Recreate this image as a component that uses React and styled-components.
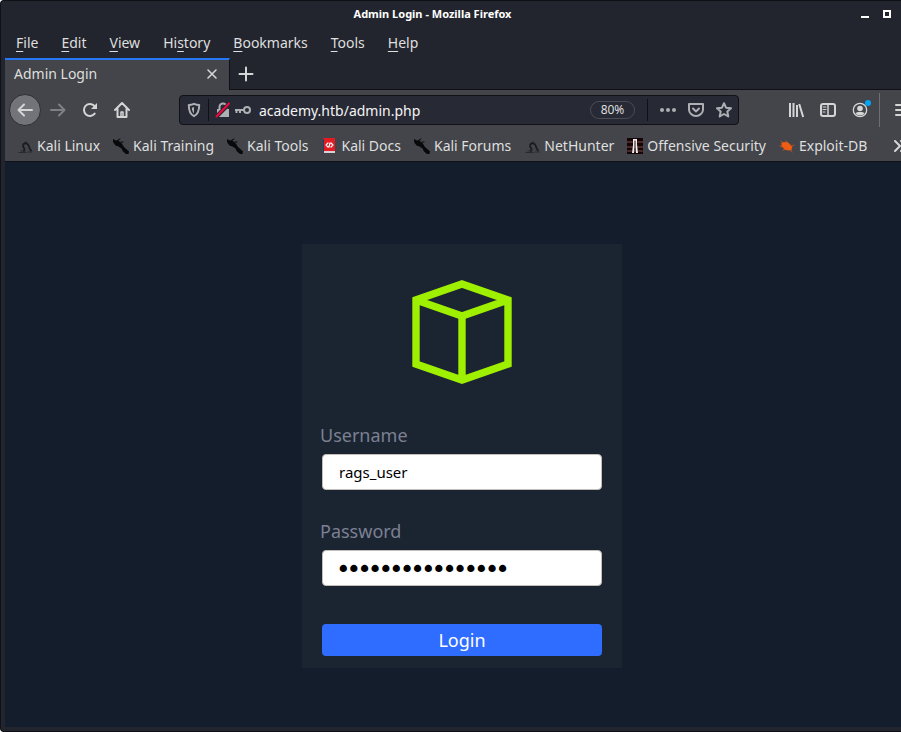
import React from "react";
import styled, { createGlobalStyle } from "styled-components";

const GlobalStyle = createGlobalStyle`
  *, *::before, *::after { box-sizing: border-box; }
  body { margin: 0; background: #fff; font-family: "Noto Sans", sans-serif; }
  button, input { font: inherit; }
`;

const ui = { text: "#dedfde", muted: "#aeafb3", frame: "#23252e", bar: "#43454b", line: "#101117" };

const Window = styled.div`
  display: flex;
  flex-direction: column;
  min-height: 100vh;
  overflow: hidden;
  padding: 0 0 4px 4px;
  background: ${ui.frame};
  color: ${ui.text};
  border: 1px solid ${ui.line};
  border-right: 0;
  border-radius: 4px 0 0 4px;
  font-size: 14px;
`;

const TitleBar = styled.header`
  display: flex;
  align-items: center;
  height: 26px;
  padding-right: 9px;
  gap: 12px;
`;

const Title = styled.h1`
  flex: 1;
  margin: 0;
  padding-left: 12px;
  text-align: center;
  font-size: 11px;
  font-weight: 700;
  line-height: 16px;
  color: #fff;
`;

const IconButton = styled.button`
  display: flex;
  flex: none;
  align-items: center;
  justify-content: center;
  width: ${(p) => p.$size || 16}px;
  height: ${(p) => p.$size || 16}px;
  padding: 0;
  border: 0;
  background: none;
  color: ${(p) => p.$color || "#d4d5d5"};
  svg { display: block; flex: none; overflow: visible; }
`;

const MenuBar = styled.nav`
  display: flex;
  align-items: center;
  height: 31px;
  gap: 23px;
  padding-left: 11px;
`;

const MenuItem = styled.button`
  padding: 0;
  border: 0;
  background: none;
  color: ${ui.text};
  line-height: 21px;
  u { text-underline-offset: 3px; text-decoration-thickness: 1px; text-decoration-skip-ink: none; }
`;

const TabStrip = styled.div`
  display: flex;
  height: 32px;
  border-bottom: 1px solid ${ui.line};
`;

const Tab = styled.div`
  display: flex;
  align-items: center;
  justify-content: space-between;
  width: 225px;
  height: 32px;
  padding: 0 9px 2px 9px;
  background: ${ui.bar};
  border-top: 2px solid #2478f5;
  border-right: 1px solid ${ui.line};
`;

const TabTitle = styled.span`
  line-height: 20px;
`;

const NavBar = styled.div`
  display: flex;
  align-items: center;
  height: 40px;
  margin-right: -10px;
  padding-left: 4px;
  background: ${ui.bar};
`;

const NavGroup = styled.div`
  display: flex;
  flex: none;
  align-items: center;
  gap: ${(p) => p.$gap}px;
`;

const BackButton = styled(IconButton)`
  border: 1px solid #2d2e33;
  border-radius: 50%;
  background: #737479;
`;

const UrlBar = styled.div`
  display: flex;
  flex: 1;
  align-items: center;
  min-width: 0;
  height: 30px;
  margin: 0 49px;
  padding: 0 6px;
  border: 1px solid ${ui.line};
  border-radius: 4px;
  background: #272934;
`;

const Divider = styled.span`
  flex: none;
  width: 1px;
  height: ${(p) => p.$height}px;
  margin: ${(p) => p.$margin};
  background: ${(p) => p.$color};
`;

const UrlInput = styled.input`
  flex: 1;
  min-width: 0;
  padding: 1px 8px 0;
  border: 0;
  outline: 0;
  background: none;
  color: #f4f4f4;
  line-height: 20px;
`;

const ZoomBadge = styled.button`
  flex: none;
  width: 45px;
  height: 18px;
  padding: 0;
  border: 1px solid #4a4b54;
  border-radius: 9px;
  background: none;
  color: ${ui.text};
  font-size: 12px;
  line-height: 16px;
`;

const BookmarkBar = styled.nav`
  display: flex;
  align-items: center;
  height: 32px;
  margin-right: -12px;
  padding: 0 3px 0 12px;
  gap: 13px;
  background: ${ui.bar};
  border-bottom: 1px solid ${ui.line};
`;

const Bookmark = styled.a`
  display: flex;
  flex: none;
  align-items: center;
  gap: 4px;
  color: ${ui.text};
  text-decoration: none;
  white-space: nowrap;
  line-height: 20px;
  svg { display: block; }
`;

const MoreButton = styled(IconButton)`
  margin-left: auto;
`;

const Page = styled.main`
  display: flex;
  flex: 1;
  justify-content: center;
  align-items: flex-start;
  margin-right: -18px;
  padding: 82px 0 59px;
  background: #141d2b;
`;

const LoginCard = styled.form`
  display: flex;
  flex-direction: column;
  width: 320px;
  padding: 34px 20px 12px;
  background: #1b2431;
`;

const Logo = styled.svg`
  display: block;
  align-self: center;
  width: 104px;
  height: 108px;
  margin-bottom: 36px;
`;

const Field = styled.div`
  display: flex;
  flex-direction: column;
  margin-bottom: ${(p) => p.$space}px;
`;

const Label = styled.label`
  margin: 0 0 6px -2px;
  color: #7b8092;
  font-size: 18px;
  line-height: 26px;
`;

const TextBox = styled.input`
  width: 100%;
  height: 36px;
  padding: 0 16px;
  border: 1px solid #c4bdb6;
  border-radius: 4px;
  background: #fff;
  color: #000;
  font-size: 15px;
  outline: 0;
`;

const PasswordBox = styled(TextBox)`
  padding: 0 15px;
  font-family: "DejaVu Sans", sans-serif;
  font-size: 18px;
  -webkit-text-stroke: 2px #000;
`;

const LoginButton = styled.button`
  height: 32px;
  padding: 0;
  border: 0;
  border-radius: 4px;
  background: #2e6dff;
  color: #fff;
  font-size: 18px;
  line-height: 32px;
`;

function Icon({ children, size = 16, width = 2, ...rest }) {
  return (
    <svg width={size} height={size} viewBox="0 0 16 16" fill="none" stroke="currentColor" strokeWidth={width} strokeLinecap="round" strokeLinejoin="round" aria-hidden="true" {...rest}>
      {children}
    </svg>
  );
}

const icons = {
  dragon: (
    <Icon stroke="#1b1c1f" width={1}>
      <path d="M7 13C9 11 5.500 9.500 6 7.500 6.500 5 9.500 4.500 11 6.500 12.500 8.500 12 10.500 14 12.500" strokeWidth="1.800" />
      <path d="M2 14.500h7M11 14h4M4 13l4-.5" stroke="#27292d" strokeWidth="1.200" />
      <path d="M6 6l3-2" />
    </Icon>
  ),
  knife: (
    <Icon stroke="none">
      <path d="M0 1l3 1.500 2-.5 2 2 1.500 1 2.500 4 5 4.500-.5 2.500-2 .5-3.500-3-1.500-3-3-2-3-1L0 4z" fill="#08090a" />
      <path d="M5 2l2-1M8 4h2M3 7l-1-1" stroke="#08090a" strokeWidth="1" />
    </Icon>
  ),
  docs: (
    <Icon stroke="none">
      <path d="M2 0h12v13H2z" fill="#e31b23" />
      <path d="M2 1h1v14H2z" fill="#263c66" />
      <path d="M3 13h11v2H3z" fill="#d9d2d3" />
      <path d="M7 5L5 7l2 2M10 5l2 2-2 2M9 5L8 9" stroke="#fff" strokeWidth="1.200" />
    </Icon>
  ),
  security: (
    <Icon stroke="none">
      <path d="M0 0h16v16H0z" fill="#160506" />
      <path d="M0 4h5M11 4h5M0 9h5M11 9h5M1 13h3M12 13h3" stroke="#4a2a29" />
      <path d="M6 1h4v5l1 9H9L8 9l-1 6H5l1-8z" fill="#f2ecec" />
      <path d="M8 3v9" stroke="#160506" strokeWidth="1" />
    </Icon>
  ),
  exploit: (
    <Icon stroke="#ef5c13" width={0.7}>
      <path d="M3 5c3-1.500 5.500-.5 7.500 1L13 9l-1 3c-4 .5-7-.500-9-4z" fill="#ef5c13" />
      <path d="M2 3l3 3M1 8l4 1M4 12l4-1M7 3l3 3M13 8l2-1M11 11l2 3" />
    </Icon>
  ),
};

const bookmarks = [
  ["Kali Linux", "dragon"],
  ["Kali Training", "knife"],
  ["Kali Tools", "knife"],
  ["Kali Docs", "docs"],
  ["Kali Forums", "knife"],
  ["NetHunter", "dragon"],
  ["Offensive Security", "security"],
  ["Exploit-DB", "exploit"],
];

const menus = [
  ["", "F", "ile"],
  ["", "E", "dit"],
  ["", "V", "iew"],
  ["Hi", "s", "tory"],
  ["", "B", "ookmarks"],
  ["", "T", "ools"],
  ["", "H", "elp"],
];

export default function App() {
  return (
    <>
      <GlobalStyle />
      <Window>
        <TitleBar>
          <Title>Admin Login - Mozilla Firefox</Title>
          <IconButton $size={10} $color="#fff" aria-label="Minimize">
            <svg width="8" height="8"><path d="M0 6h8v2H0z" fill="currentColor" /></svg>
          </IconButton>
          <IconButton $size={10} $color="#fff" aria-label="Maximize">
            <svg width="8" height="8"><path d="M1 1h6v6H1z" fill="none" stroke="currentColor" strokeWidth="2" /></svg>
          </IconButton>
        </TitleBar>

        <MenuBar>
          {menus.map(([before, key, after]) => (
            <MenuItem key={before + key + after}>{before}<u>{key}</u>{after}</MenuItem>
          ))}
        </MenuBar>

        <TabStrip>
          <Tab>
            <TabTitle>Admin Login</TabTitle>
            <IconButton aria-label="Close tab"><Icon width={1.6}><path d="M4 4l8 8M12 4l-8 8" /></Icon></IconButton>
          </Tab>
          <IconButton $size={31} aria-label="New tab"><Icon><path d="M8 1.500v13M1.500 8h13" /></Icon></IconButton>
        </TabStrip>

        <NavBar>
          <NavGroup $gap={9}>
            <BackButton $size={32} aria-label="Back"><Icon><path d="M15 8H1.500M7 2.500L1.500 8 7 13.500" /></Icon></BackButton>
            <NavGroup $gap={16}>
              <IconButton $color="#7e8084" aria-label="Forward"><Icon><path d="M1 8h13.500M9 2.500L14.500 8 9 13.500" /></Icon></IconButton>
              <IconButton aria-label="Reload">
                <Icon><path d="M12.700 11.600A6 6 0 1 1 12.500 4" /><path d="M15 1v6H9z" fill="currentColor" stroke="none" /></Icon>
              </IconButton>
              <IconButton aria-label="Home">
                <Icon><path d="M1 8l7-7 7 7M3.500 7v8h9V7" /><path d="M7 14v-4h2v4" strokeWidth="1.500" /></Icon>
              </IconButton>
            </NavGroup>
          </NavGroup>

          <UrlBar>
            <IconButton $color={ui.muted} aria-label="Tracking protection">
              <Icon><path d="M8 1.800c1.800.8 3.500 1.200 5.200 1.200C13.200 9 11.500 12.500 8 14.200 4.500 12.500 2.800 9 2.800 3 4.500 3 6.200 2.600 8 1.800z" /><path d="M8 5v6.500C6.500 10 6 8 5.800 5.700z" fill="currentColor" stroke="none" /></Icon>
            </IconButton>
            <Divider $height={22} $margin="0 6px" $color={ui.line} />
            <NavGroup $gap={4}>
              <IconButton $color={ui.muted} aria-label="Connection is not secure">
                <Icon><path d="M4.500 7V5a3.500 3.500 0 0 1 7 0v2" /><path d="M2 7h12v8H2z" fill="currentColor" stroke="none" /><path d="M1.500 14.500L14 2" stroke="#272934" strokeWidth="4" /><path d="M1.500 14.500L14 1.500" stroke="#f5083d" /></Icon>
              </IconButton>
              <IconButton $color={ui.muted} aria-label="Saved password">
                <Icon><circle cx="12" cy="8" r="3" /><path d="M9 8H0M1.500 8v3M5 8v3" strokeLinecap="butt" /></Icon>
              </IconButton>
            </NavGroup>
            <UrlInput defaultValue="academy.htb/admin.php" aria-label="Address" />
            <ZoomBadge aria-label="Zoom level">80%</ZoomBadge>
            <Divider $height={22} $margin="0 12px" $color={ui.line} />
            <NavGroup $gap={12}>
              <IconButton $color={ui.muted} aria-label="Page actions">
                <Icon stroke="none"><circle cx="2" cy="8" r="2" fill="currentColor" /><circle cx="8" cy="8" r="2" fill="currentColor" /><circle cx="14" cy="8" r="2" fill="currentColor" /></Icon>
              </IconButton>
              <IconButton $color={ui.muted} aria-label="Save to Pocket">
                <Icon><path d="M1 2h14v5.500a7 6.500 0 0 1-14 0z" /><path d="M5 6.500l3 3 3-3" /></Icon>
              </IconButton>
              <IconButton $color={ui.muted} aria-label="Bookmark this page">
                <Icon><path d="M8 1.200l2 4.500 5 .5-3.700 3.300 1 5L8 12l-4.300 2.500 1-5L1 6.200l5-.5z" /></Icon>
              </IconButton>
            </NavGroup>
          </UrlBar>

          <NavGroup $gap={16}>
            <IconButton aria-label="Library">
              <Icon strokeLinecap="butt"><path d="M2 1v14M5.500 1v14M9 3v12M11.200 2l4 13" /></Icon>
            </IconButton>
            <IconButton aria-label="Sidebars">
              <Icon><rect x="1" y="2" width="14" height="12" rx="2" /><path d="M8 2v12" strokeWidth="1.500" /><path d="M3 5h3M3 7.500h3M3 10h2" strokeWidth="1" /></Icon>
            </IconButton>
            <IconButton aria-label="Account">
              <Icon width={1.3}><circle cx="8" cy="8" r="6.700" /><circle cx="8" cy="6.500" r="2.800" fill="currentColor" stroke="none" /><path d="M3.500 11.200c1-1.700 8-1.700 9 0-2 3-7 3-9 0z" fill="currentColor" stroke="none" /><circle cx="16" cy="1" r="3" fill="#00a5f5" stroke="none" /></Icon>
            </IconButton>
          </NavGroup>
          <Divider $height={34} $margin="0 15px 0 11px" $color="#6d6e73" />
          <IconButton aria-label="Open menu"><Icon><path d="M1 3h14M1 8h14M1 13h14" /></Icon></IconButton>
        </NavBar>

        <BookmarkBar>
          {bookmarks.map(([label, icon]) => (
            <Bookmark key={label} href="#">{icons[icon]}{label}</Bookmark>
          ))}
          <MoreButton aria-label="More bookmarks"><Icon><path d="M1 3l5 5-5 5M7 3l5 5-5 5" /></Icon></MoreButton>
        </BookmarkBar>

        <Page>
          <LoginCard onSubmit={(e) => e.preventDefault()}>
            <Logo viewBox="0 0 104 108" fill="none" stroke="#9fef00" strokeWidth="7.400" role="img" aria-label="Academy">
              <path d="M52 6L98 22V86L52 102 6 86V22zM6 22L52 38 98 22M52 38V102" strokeLinejoin="miter" />
            </Logo>
            <Field $space={28}>
              <Label htmlFor="username">Username</Label>
              <TextBox id="username" defaultValue="rags_user" />
            </Field>
            <Field $space={38}>
              <Label htmlFor="password">Password</Label>
              <PasswordBox id="password" type="password" defaultValue="academy-password" />
            </Field>
            <LoginButton type="submit">Login</LoginButton>
          </LoginCard>
        </Page>
      </Window>
    </>
  );
}
